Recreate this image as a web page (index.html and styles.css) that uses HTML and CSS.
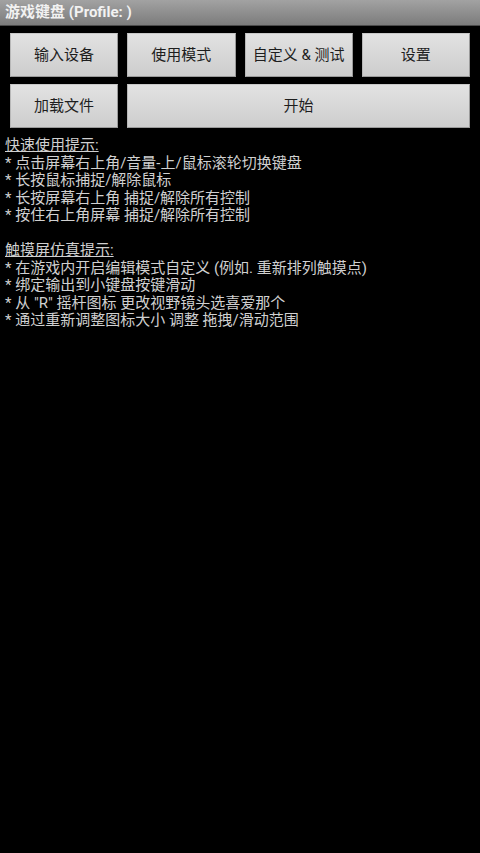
FILE: index.html
```html
<!DOCTYPE html>
<html lang="zh">
<head>
    <meta charset="UTF-8">
    <meta name="viewport" content="width=device-width, initial-scale=1.0">
    <title>游戏键盘</title>
    <link rel="stylesheet" href="styles.css">
</head>
<body>
    <div class="title-bar">游戏键盘 (Profile: )</div>
    <main>
        <div class="button-grid">
            <a href="javascript:void(0);" class="button">输入设备</a>
            <a href="javascript:void(0);" class="button">使用模式</a>
            <a href="javascript:void(0);" class="button">自定义 &amp; 测试</a>
            <a href="javascript:void(0);" class="button">设置</a>
            <a href="javascript:void(0);" class="button">加载文件</a>
            <a href="javascript:void(0);" class="button wide">开始</a>
        </div>
        <div class="tips">
            <div class="tips-title">快速使用提示:</div>
            <div>* 点击屏幕右上角/音量-上/鼠标滚轮切换键盘</div>
            <div>* 长按鼠标捕捉/解除鼠标</div>
            <div>* 长按屏幕右上角 捕捉/解除所有控制</div>
            <div>* 按住右上角屏幕 捕捉/解除所有控制</div>
            <div class="blank"></div>
            <div class="tips-title">触摸屏仿真提示:</div>
            <div>* 在游戏内开启编辑模式自定义 (例如. 重新排列触摸点)</div>
            <div>* 绑定输出到小键盘按键滑动</div>
            <div>* 从 "R" 摇杆图标 更改视野镜头选喜爱那个</div>
            <div>* 通过重新调整图标大小 调整 拖拽/滑动范围</div>
        </div>
    </main>
</body>
</html>
```

FILE: styles.css
```css
body {
    margin: 0;
    padding: 0;
    background-color: #000;
    font-family: Roboto, "Noto Sans CJK SC", sans-serif;
    height: 853px;
    overflow: hidden; /* No scrolling */
}

.title-bar {
    height: 25px;
    line-height: 25px;
    padding-left: 5px;
    background: linear-gradient(#a2a2a2, #7c7c7c);
    border-bottom: 1px solid #4a4a4a;
    color: #f2f2f2;
    font-size: 15px;
    font-weight: bold;
}

.button-grid {
    display: grid;
    grid-template-columns: repeat(4, 1fr);
    gap: 7px 9px; /* row gap, column gap */
    padding: 7px 10px 0 10px;
}

.button {
    height: 42px;
    line-height: 42px;
    background: linear-gradient(#e2e2e2, #cdcdcd);
    border: 1px solid #9a9a9a;
    border-top-color: #c8c8c8;
    border-left-color: #b8b8b8;
    color: #1e1e1e;
    text-decoration: none;
    font-size: 15px;
    text-align: center;
    white-space: nowrap;
}

.button.wide {
    grid-column: span 3;
}

.tips {
    padding: 9px 0 0 5px;
    color: #d0d0d0;
    font-size: 15px;
    line-height: 17.5px;
}

.tips-title {
    text-decoration: underline;
}

.blank {
    height: 17.5px;
}
```
